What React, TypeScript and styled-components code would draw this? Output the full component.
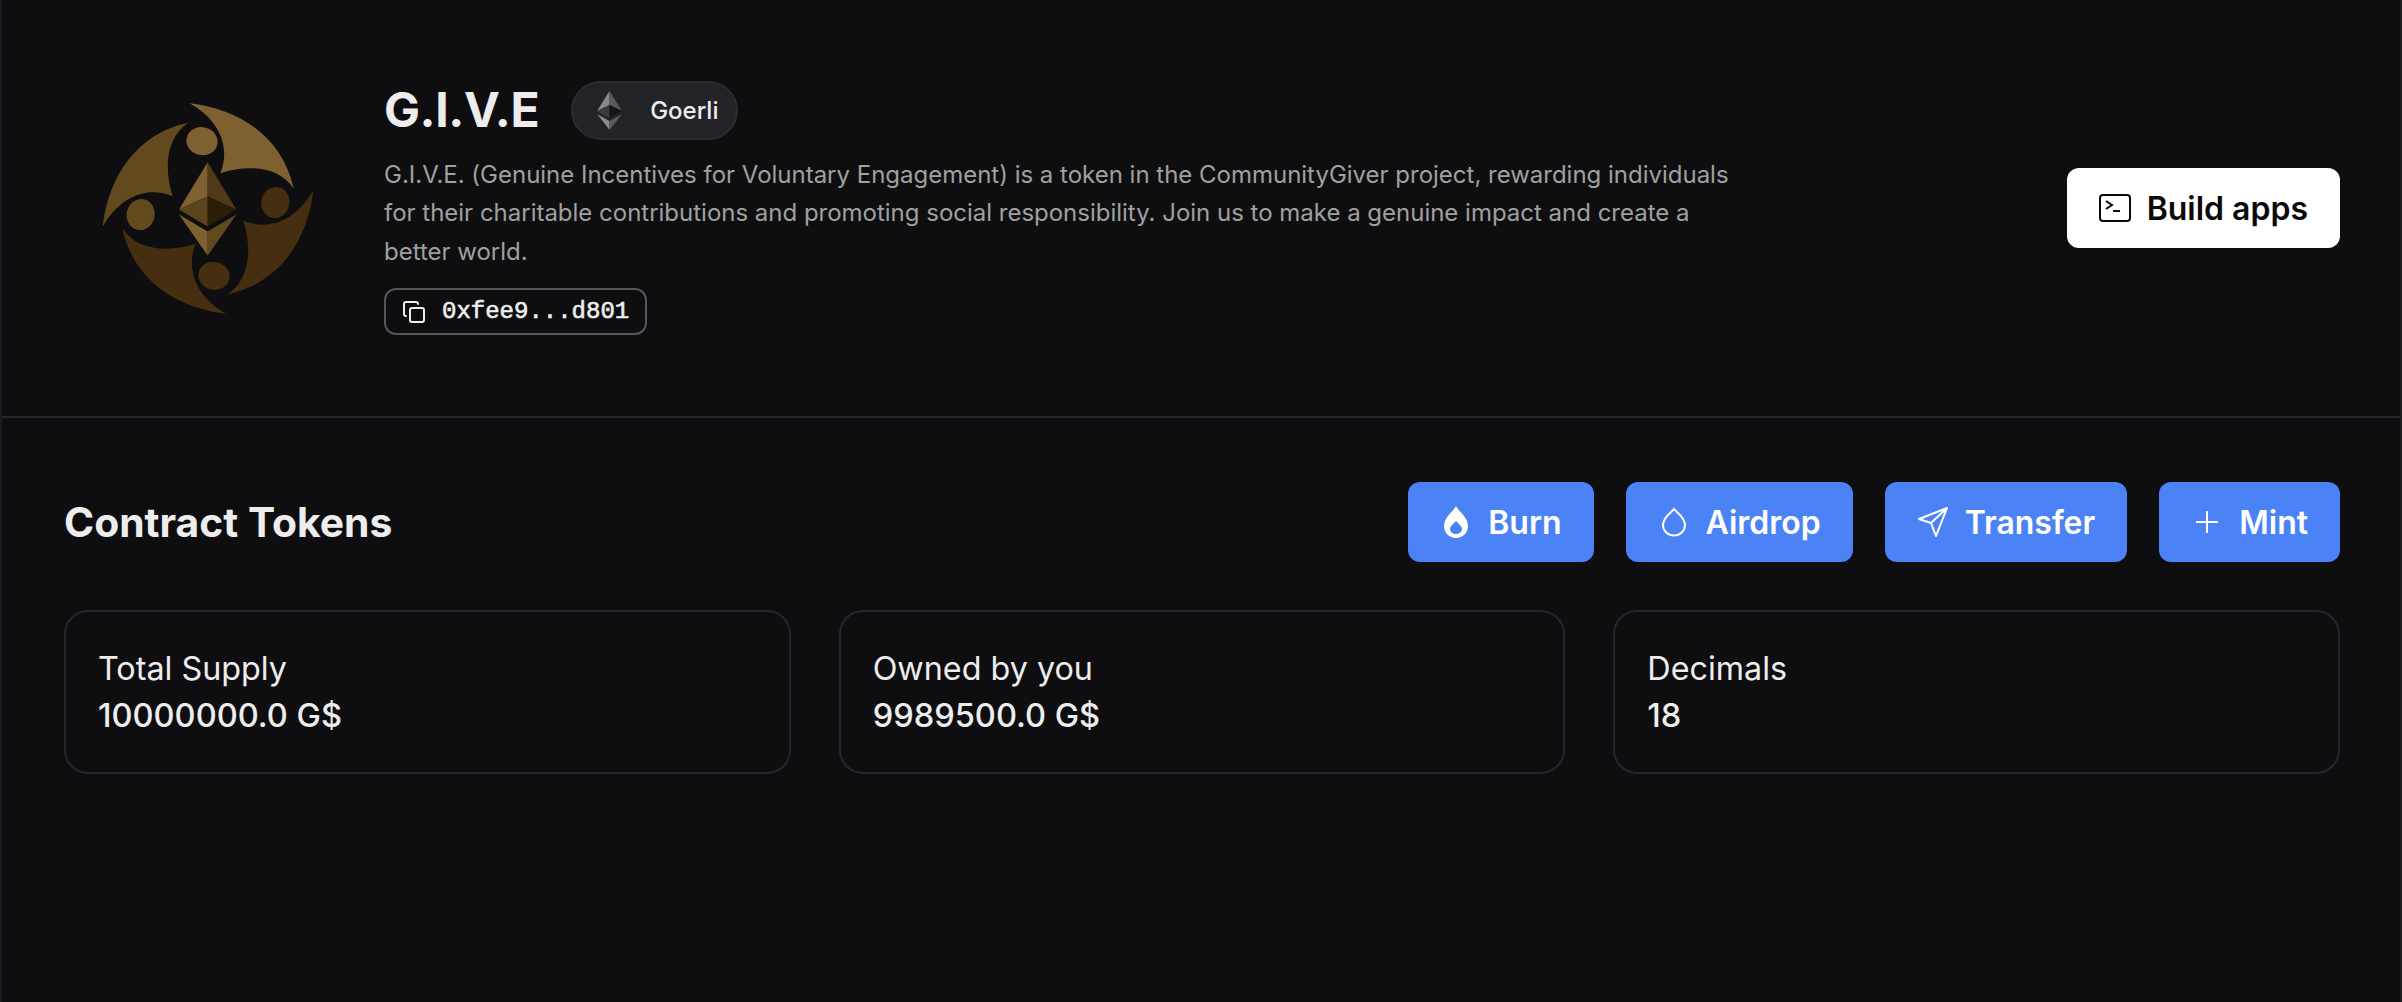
import styled, { createGlobalStyle } from 'styled-components'

const GlobalStyle = createGlobalStyle`
    body {
        margin: 0;
        background-color: #0e0e11;
        font-family: "Inter", "Liberation Sans", sans-serif;
    }
`

const Page = styled.div`
    min-height: 100vh;
    box-sizing: border-box;
    border-left: 2px solid #1b1c20;
    border-right: 2px solid #1b1c20;
`

const Header = styled.header`
    display: flex;
    align-items: center;
    justify-content: space-between;
    height: 418px;
    box-sizing: border-box;
    padding: 0 60px 0 62px;
    border-bottom: 2px solid #25272d;
`

const HeaderLeft = styled.div`
    display: flex;
    align-items: center;
    gap: 71px;
`

const LogoBox = styled.div`
    display: flex;
    margin-left: 39px;
`

const Info = styled.div`
    display: flex;
    flex-direction: column;
    align-items: flex-start;
`

const TitleRow = styled.div`
    display: flex;
    align-items: center;
    gap: 32px;
`

const Title = styled.h1`
    margin: 0;
    padding-bottom: 2px;
    font-size: 48px;
    line-height: 57px;
    font-weight: 700;
    letter-spacing: -0.4px;
    color: #ededed;
`

const NetworkPill = styled.div`
    display: flex;
    align-items: center;
    gap: 28px;
    height: 59px;
    box-sizing: border-box;
    padding: 0 18px 0 24px;
    border-radius: 30px;
    border: 2px solid #2a2c32;
    background-color: #212328;
    font-size: 24px;
    font-weight: 500;
    color: #ededed;
`

const Description = styled.p`
    margin: 16px 0 17px;
    width: 1370px;
    font-size: 24px;
    line-height: 38.4px;
    letter-spacing: -0.01px;
    color: #a0a0a0;
`

const AddressChip = styled.button`
    display: flex;
    align-items: center;
    gap: 16px;
    height: 47px;
    box-sizing: border-box;
    padding: 0 16px;
    border: 2px solid #55565a;
    border-radius: 12px;
    background: transparent;
    font-family: "Liberation Mono", monospace;
    font-size: 24px;
    -webkit-text-stroke: 0.6px #ededed;
    color: #ededed;
`

const Button = styled.button<{ $light?: boolean }>`
    display: flex;
    align-items: center;
    gap: 16px;
    height: 80px;
    box-sizing: border-box;
    padding: 0 32px;
    border: none;
    border-radius: 12px;
    background-color: ${(p) => (p.$light ? '#ffffff' : '#4b83f7')};
    color: ${(p) => (p.$light ? '#0a0a0a' : '#ffffff')};
    font-family: inherit;
    font-size: 32px;
    font-weight: 600;
`

const Section = styled.section`
    padding: 64px 60px 0 62px;
`

const SectionHead = styled.div`
    display: flex;
    align-items: center;
    justify-content: space-between;
    margin-bottom: 48px;
`

const SectionTitle = styled.h2`
    margin: 0;
    font-size: 40.8px;
    font-weight: 700;
    color: #ededed;
`

const Actions = styled.div`
    display: flex;
    gap: 32px;
`

const Cards = styled.div`
    display: grid;
    grid-template-columns: repeat(3, 1fr);
    gap: 48px;
`

const Card = styled.div`
    display: flex;
    flex-direction: column;
    justify-content: center;
    height: 164px;
    box-sizing: border-box;
    padding: 0 32px;
    border: 2px solid #25272d;
    border-radius: 24px;
    font-size: 32.3px;
    line-height: 47px;
    color: #ededed;
`

const Value = styled.div`
    font-size: 32.6px;
    font-weight: 500;
`

function Logo() {
    const blade = 'M390 128C540 145 670 230 702 385C660 320 570 310 482 338C510 270 490 185 390 128Z'
    const parts = [
        { angle: 0, color: '#7f6030' },
        { angle: -90, color: '#634a1e' },
        { angle: -180, color: '#452f10' },
        { angle: -270, color: '#452f10' },
    ]
    return (
        <svg width="210" height="211" viewBox="130 128 630 632">
            {parts.map((part) => (
                <g key={part.angle} transform={`rotate(${part.angle} 445 444)`} fill={part.color}>
                    <path d={blade} />
                    <ellipse cx="427" cy="242" rx="47" ry="42" transform="rotate(12 427 242)" />
                </g>
            ))}
            <path d="M444 305L358 447L444 408Z" fill="#7f6030" />
            <path d="M444 305L530 447L444 408Z" fill="#4f3a18" />
            <path d="M358 447L444 408V498Z" fill="#5c441c" />
            <path d="M530 447L444 408V498Z" fill="#2a1e08" />
            <path d="M358 462L444 513V585Z" fill="#7f6030" />
            <path d="M530 462L444 513V585Z" fill="#634a1e" />
        </svg>
    )
}

function EthIcon() {
    return (
        <svg width="25" height="39" viewBox="0 0 25 39">
            <path d="M12.5 0L0 20L12.5 14Z" fill="#8a8a8a" />
            <path d="M12.5 0L25 20L12.5 14Z" fill="#5a5a5a" />
            <path d="M0 20L12.5 14V27Z" fill="#3c3c3c" />
            <path d="M25 20L12.5 14V27Z" fill="#141414" />
            <path d="M0 23L12.5 30V39Z" fill="#8a8a8a" />
            <path d="M25 23L12.5 30V39Z" fill="#5a5a5a" />
        </svg>
    )
}

function CopyIcon() {
    return (
        <svg width="24" height="24" viewBox="0 0 24 24" fill="none" stroke="#ededed" strokeWidth="2" strokeLinecap="round" strokeLinejoin="round">
            <rect x="8" y="8" width="14" height="14" rx="2" />
            <path d="M4 16c-1.100 0-2-.9-2-2V4c0-1.100.9-2 2-2h10c1.100 0 2 .9 2 2" />
        </svg>
    )
}

function TerminalIcon() {
    return (
        <svg width="32" height="32" viewBox="0 0 32 32" fill="none" stroke="#0a0a0a" strokeWidth="2">
            <rect x="1" y="3" width="30" height="26" rx="3" />
            <path d="M7 9l6 4-6 4M14 19h7" />
        </svg>
    )
}

function BurnIcon() {
    return (
        <svg width="32" height="32" viewBox="0 0 32 32">
            <path
                fillRule="evenodd"
                fill="#ffffff"
                d="M16 0C19 6 28 11 28 20C28 27 22.500 32 16 32C9.500 32 4 27 4 20C4 11 13 6 16 0ZM16 15C13.500 18 10 20 10 23C10 26 13 28 16 28C19 28 22 26 22 23C22 20 18.500 18 16 15Z"
            />
        </svg>
    )
}

function DropIcon() {
    return (
        <svg width="32" height="32" viewBox="0 0 32 32" fill="none" stroke="#ffffff" strokeWidth="2">
            <path d="M16 3C18 6 27 11 27 19C27 25 22 29.500 16 29.500C10 29.500 5 25 5 19C5 11 14 6 16 3Z" />
        </svg>
    )
}

function SendIcon() {
    return (
        <svg width="32" height="32" viewBox="0 0 32 32" fill="none" stroke="#ffffff" strokeWidth="2" strokeLinejoin="round" strokeLinecap="round">
            <path d="M30 2L2 13L14 17L19 30ZM30 2L14 17" />
        </svg>
    )
}

function PlusIcon() {
    return (
        <svg width="32" height="32" viewBox="0 0 32 32" fill="none" stroke="#ffffff" strokeWidth="2">
            <path d="M16 5V27M5 16H27" />
        </svg>
    )
}

export default function App() {
    return (
        <Page>
            <GlobalStyle />
            <Header>
                <HeaderLeft>
                    <LogoBox>
                        <Logo />
                    </LogoBox>
                    <Info>
                        <TitleRow>
                            <Title>G.I.V.E</Title>
                            <NetworkPill>
                                <EthIcon />
                                Goerli
                            </NetworkPill>
                        </TitleRow>
                        <Description>
                            G.I.V.E. (Genuine Incentives for Voluntary Engagement) is a token in the CommunityGiver project, rewarding individuals for their charitable contributions and promoting social responsibility. Join us to make a genuine impact and create a better world.
                        </Description>
                        <AddressChip>
                            <CopyIcon />
                            0xfee9...d801
                        </AddressChip>
                    </Info>
                </HeaderLeft>
                <Button $light>
                    <TerminalIcon />
                    Build apps
                </Button>
            </Header>
            <Section>
                <SectionHead>
                    <SectionTitle>Contract Tokens</SectionTitle>
                    <Actions>
                        <Button><BurnIcon />Burn</Button>
                        <Button><DropIcon />Airdrop</Button>
                        <Button><SendIcon />Transfer</Button>
                        <Button><PlusIcon />Mint</Button>
                    </Actions>
                </SectionHead>
                <Cards>
                    <Card>
                        Total Supply
                        <Value>10000000.0 G$</Value>
                    </Card>
                    <Card>
                        Owned by you
                        <Value>9989500.0 G$</Value>
                    </Card>
                    <Card>
                        Decimals
                        <Value>18</Value>
                    </Card>
                </Cards>
            </Section>
        </Page>
    )
}
